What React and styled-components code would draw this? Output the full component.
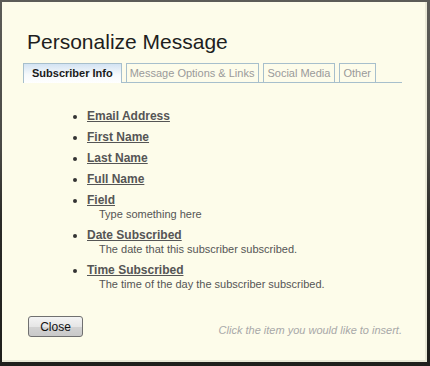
import styled, { createGlobalStyle } from "styled-components"

const Global = createGlobalStyle`
    html, body {
        margin: 0;
        padding: 0;
        background: #2a2a28;
    }
    body {
        font-family: "Liberation Sans", Arial, sans-serif;
    }
`

const Backdrop = styled.div`
    width: 430px;
    height: 366px;
    box-sizing: border-box;
    padding: 2px 3px 4px 2px;
    background: linear-gradient(180deg, #5c5c58 0%, #4a4a46 40%, #2b2b28 60%, #1f1f1c 100%);
`

const Dialog = styled.div`
    height: 100%;
    box-sizing: border-box;
    background: #fdfcea;
    border-right: 2px solid #e9e8d6;
    border-bottom: 2px solid #e9e8d6;
    padding: 27px 23px 0 21px;
    display: flex;
    flex-direction: column;
`

const Title = styled.h1`
    margin: 0 0 9px 4px;
    font-size: 21px;
    font-weight: normal;
    line-height: 25px;
    color: #1e1e1e;
`

const Tabs = styled.div`
    display: flex;
    align-items: flex-end;
    gap: 4px;
    border-bottom: 1px solid #a7bfcc;
`

const Tab = styled.div`
    line-height: 18px;
    padding: ${p => p.$active ? "0 8px" : "0 4px 0 3px"};
    border: 1px solid #a7bfcc;
    border-bottom: none;
    font-size: 11px;
    font-weight: ${p => p.$active ? "bold" : "normal"};
    color: ${p => p.$active ? "#1a1a1a" : "#9a9a9a"};
    background: ${p => p.$active ? "linear-gradient(180deg, #d3e3f3 0%, #f6f9fb 55%, #ffffff 100%)" : "transparent"};
    margin-bottom: ${p => p.$active ? "-1px" : "0"};
    height: ${p => p.$active ? "19px" : "18px"};
`

const List = styled.ul`
    margin: 26px 0 0 0;
    padding: 0 0 0 64px;
    list-style: disc;
    color: #333;
`

const Item = styled.li`
    margin-bottom: 7px;
    font-size: 12px;
    line-height: 14px;
`

const ItemLink = styled.a`
    font-weight: bold;
    color: #555;
    text-decoration: underline;
    cursor: pointer;
`

const Desc = styled.div`
    padding-left: 12px;
    font-size: 11px;
    line-height: 14px;
    color: #555;
`

const Footer = styled.div`
    margin-top: auto;
    margin-bottom: 23px;
    display: flex;
    align-items: center;
    justify-content: space-between;
    padding-left: 5px;
`

const CloseBtn = styled.button`
    width: 55px;
    height: 21px;
    padding: 0;
    font-family: "Liberation Sans", Arial, sans-serif;
    font-size: 12px;
    color: #111;
    border: 1px solid #707070;
    border-radius: 3px;
    background: linear-gradient(180deg, #f4f4f4 0%, #e6e6e6 50%, #d3d3d3 51%, #c9c9c9 100%);
`

const Hint = styled.span`
    font-size: 11px;
    font-style: italic;
    color: #a8a8a8;
    margin-top: 6px;
`

const fields = [
    { name: "Email Address" },
    { name: "First Name" },
    { name: "Last Name" },
    { name: "Full Name" },
    { name: "Field", desc: "Type something here" },
    { name: "Date Subscribed", desc: "The date that this subscriber subscribed." },
    { name: "Time Subscribed", desc: "The time of the day the subscriber subscribed." },
]

const App = () => {
    return (
        <Backdrop>
            <Global />
            <Dialog>
                <Title>Personalize Message</Title>
                <Tabs>
                    <Tab $active>Subscriber Info</Tab>
                    <Tab>Message Options &amp; Links</Tab>
                    <Tab>Social Media</Tab>
                    <Tab>Other</Tab>
                </Tabs>
                <List>
                    {fields.map(f => (
                        <Item key={f.name}>
                            <ItemLink>{f.name}</ItemLink>
                            {f.desc && <Desc>{f.desc}</Desc>}
                        </Item>
                    ))}
                </List>
                <Footer>
                    <CloseBtn>Close</CloseBtn>
                    <Hint>Click the item you would like to insert.</Hint>
                </Footer>
            </Dialog>
        </Backdrop>
    )
}

export default App
